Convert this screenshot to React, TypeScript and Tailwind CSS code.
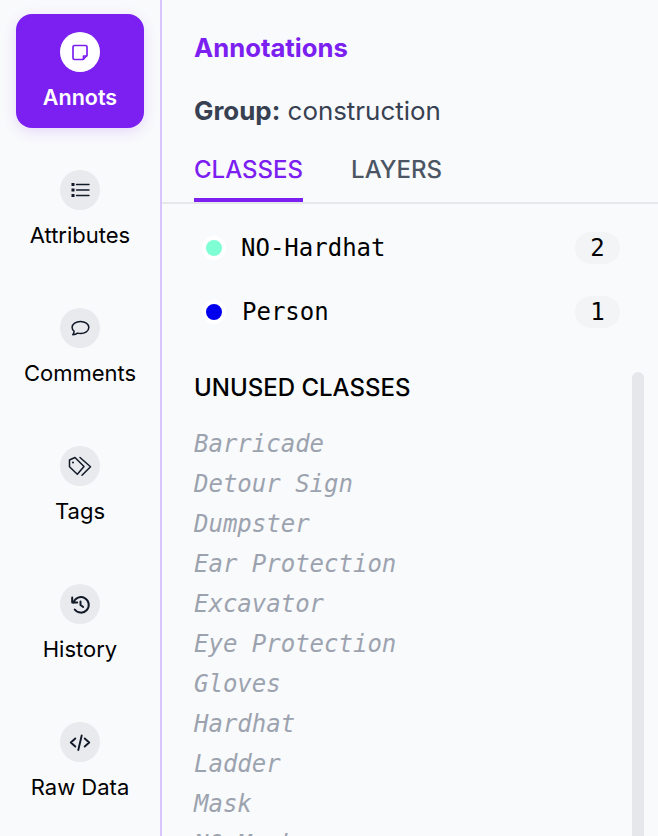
import React from "react";

const Circle = ({ children, active }: { children: React.ReactNode; active?: boolean }) => (
  <div className={`h-10 w-10 rounded-full ${active ? "bg-white" : "bg-[#e9eaed]"}`}>
    {children}
  </div>
);

const S = ({ children, sw = 1.8, color = "#111827" }: { children: React.ReactNode; sw?: number; color?: string }) => (
  <svg width="40" height="40" viewBox="0 0 40 40" fill="none" stroke={color} strokeWidth={sw} strokeLinecap="round" strokeLinejoin="round">
    {children}
  </svg>
);

const nav = [
  {
    label: "Attributes",
    icon: (
      <S sw={1.4}>
        <path d="M16.500 14.500H29M16.500 20H29M16.500 25.500H29" />
        <rect x="11.500" y="13" width="3" height="3" fill="#111827" stroke="none" />
        <rect x="11.500" y="18.500" width="3" height="3" fill="#111827" stroke="none" />
        <rect x="11.500" y="24" width="3" height="3" fill="#111827" stroke="none" />
      </S>
    ),
  },
  {
    label: "Comments",
    icon: (
      <S sw={1.5}>
        <path d="M20.500 13.500c4.500 0 8.300 2.500 8.300 6s-3.800 6-8.300 6c-1 0-2-.1-2.900-.4-1.200.9-2.900 1.500-4.800 1.600.8-1 1.300-2.200 1.300-3.400-1.200-1.100-2-2.400-2-3.800 0-3.500 3.800-6 8.400-6z" />
      </S>
    ),
  },
  {
    label: "Tags",
    icon: (
      <S sw={1.5}>
        <path d="M9.500 14 15 11.500l9 9-6.700 7.800-7.800-7.600z" />
        <path d="M20 11.500l10.500 9.200-8.500 8.600" />
        <circle cx="13" cy="16.500" r="1" fill="#111827" stroke="none" />
      </S>
    ),
  },
  {
    label: "History",
    icon: (
      <S sw={2}>
        <path d="M13.500 18.500A7.800 7.800 0 1 1 14.700 25.500" />
        <path d="M12.200 13.500v5h5" />
        <path d="M20.500 17.500V21l2.700 2" />
      </S>
    ),
  },
  {
    label: "Raw Data",
    icon: (
      <S sw={1.9}>
        <path d="M15.300 16.500l-4.500 4 4.500 4M24.700 16.500l4.500 4-4.500 4M21.700 13.500l-3.400 14.500" />
      </S>
    ),
  },
];

const unused = ["Barricade", "Detour Sign", "Dumpster", "Ear Protection", "Excavator", "Eye Protection", "Gloves", "Hardhat", "Ladder", "Mask", "NO-Mask"];

const Row = ({ color, name, n, nudge }: { color: string; name: string; n: number; nudge?: boolean }) => (
  <div className="flex h-8 items-center justify-between">
    <div className={`flex items-center ${nudge ? "gap-4" : "gap-[15px]"}`}>
      <span className="h-6 w-6 rounded-full border-4 border-white" style={{ backgroundColor: color }} />
      <span className="font-['DejaVu_Sans_Mono',monospace] text-[24px] leading-8 text-black">{name}</span>
    </div>
    <span className="flex h-8 w-[45px] items-center justify-center rounded-full bg-[#f3f4f6] font-['DejaVu_Sans_Mono',monospace] text-[24px] text-black">{n}</span>
  </div>
);

export default function App() {
  return (
    <div className="flex h-[836px] w-[658px] overflow-hidden bg-[#f9fafc] font-['Inter',sans-serif]">
      <aside className="flex w-[162px] shrink-0 flex-col gap-6 border-r-2 border-[#dcc4fc] px-4 pt-[14px]">
        <div className="flex h-[114px] flex-col items-center rounded-2xl bg-[#7b20f0] pt-[18px] shadow-[0_4px_14px_rgba(126,34,238,0.15)]">
          <Circle active>
            <S color="#7b20f0" sw={1.7}>
              <path d="M14.500 13.500h11a1.500 1.500 0 0 1 1.500 1.500v8.500l-4 4h-8.500a1.500 1.500 0 0 1-1.500-1.500V15a1.500 1.500 0 0 1 1.500-1.500z" />
              <path d="M23.500 24v3M24 24h2.500" />
            </S>
          </Circle>
          <span className="mt-[10px] text-[21.5px] font-semibold leading-[30px] text-white">Annots</span>
        </div>
        {nav.map((n) => (
          <div key={n.label} className="flex h-[114px] flex-col items-center pt-[18px]">
            <Circle>{n.icon}</Circle>
            <span className="mt-[10px] text-[22px] leading-[30px] text-black">{n.label}</span>
          </div>
        ))}
      </aside>
      <main className="flex min-w-0 flex-1 flex-col">
        <div className="px-8">
          <h1 className="mt-8 text-[25.7px] font-bold leading-8 text-[#7b20f0]">Annotations</h1>
          <p className="mt-[31px] text-[25.9px] leading-8 text-[#374151]"><b className="font-bold">Group:</b> construction</p>
        </div>
        <div className="mt-[25px] flex h-[52px] gap-12 border-b-2 border-[#e5e7eb] px-8">
          <div className="h-[50px] border-b-4 border-[#7b20f0] pt-[2px] text-[24px] font-medium leading-8 text-[#7b20f0]">CLASSES</div>
          <div className="pt-[2px] text-[24px] font-medium leading-8 text-[#4b5563]">LAYERS</div>
        </div>
        <div className="mt-7 flex flex-col gap-8 pl-10 pr-[38px]">
          <Row color="#7fffd4" name="NO-Hardhat" n={2} />
          <Row color="#0000ee" name="Person" n={1} nudge />
        </div>
        <div className="mt-11 flex min-h-0 flex-1 pr-[14px]">
          <div className="min-w-0 flex-1 pl-8">
            <h2 className="h-8 text-[24px] font-medium leading-8 text-black">UNUSED CLASSES</h2>
            <ul className="mt-5 flex flex-col">
              {unused.map((u) => (
                <li key={u} className="h-10 font-['DejaVu_Sans_Mono',monospace] text-[24px] italic leading-10 text-[#9ca3af]">{u}</li>
              ))}
            </ul>
          </div>
          <div className="w-3 shrink-0 rounded-t-full bg-[#e5e7eb]" />
        </div>
      </main>
    </div>
  );
}
